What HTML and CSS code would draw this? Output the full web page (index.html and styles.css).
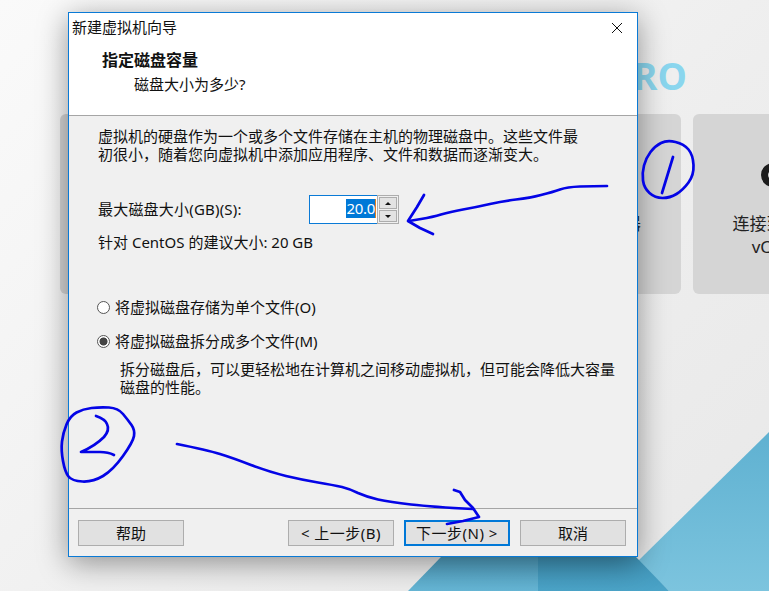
FILE: index.html
```html
<!DOCTYPE html>
<html lang="zh-CN">
<head>
    <meta charset="UTF-8">
    <meta name="viewport" content="width=device-width, initial-scale=1.0">
    <title>新建虚拟机向导</title>
    <link rel="stylesheet" href="styles.css">
</head>
<body>
    <!-- home page behind the dialog -->
    <div class="home">
        <svg class="shapes" width="769" height="591" viewBox="0 0 769 591">
            <defs>
                <linearGradient id="tri1" x1="0" y1="0" x2="0" y2="1">
                    <stop offset="0" stop-color="#5fb1d1"/>
                    <stop offset="1" stop-color="#7cc4de"/>
                </linearGradient>
                <linearGradient id="tri2" x1="0" y1="0" x2="0" y2="1">
                    <stop offset="0" stop-color="#4f9fc0"/>
                    <stop offset="1" stop-color="#66b6d5"/>
                </linearGradient>
                <linearGradient id="tri3" x1="0" y1="0" x2="0" y2="1">
                    <stop offset="0" stop-color="#3f94b8"/>
                    <stop offset="1" stop-color="#4ba4c8"/>
                </linearGradient>
            </defs>
            <polygon points="769,432 638,561 669,591 769,591" fill="url(#tri1)"/>
            <polygon points="441,557 538,557 538,591 408,591" fill="url(#tri2)"/>
            <polygon points="538,557 636,557 669,591 538,591" fill="url(#tri3)"/>
        </svg>
        <div class="brand">PRO</div>
        <div class="cards">
            <div class="card"></div>
            <div class="card"></div>
            <div class="card"><div class="card-label">连接远程服务器</div></div>
            <div class="card card-cut">
                <div class="card-icon"></div>
                <div class="card-label">连接到 VMware<br>vCloud Air</div>
            </div>
        </div>
    </div>

    <div class="dialog">
        <div class="titlebar">
            <span class="title-text">新建虚拟机向导</span>
            <svg class="close" width="14" height="14" viewBox="0 0 14 14">
                <path d="M2 2 L12 12 M12 2 L2 12" stroke="#111" stroke-width="1" fill="none"/>
            </svg>
        </div>
        <div class="header">
            <div class="header-title">指定磁盘容量</div>
            <div class="header-sub">磁盘大小为多少?</div>
        </div>
        <div class="content">
            <p class="intro">虚拟机的硬盘作为一个或多个文件存储在主机的物理磁盘中。这些文件最<br>初很小，随着您向虚拟机中添加应用程序、文件和数据而逐渐变大。</p>
            <div class="size-row">
                <label class="size-label">最大磁盘大小(GB)(S):</label>
                <div class="spin-input"><span class="selected">20.0</span></div>
                <div class="spin-btns">
                    <div class="spin-btn"><i class="up"></i></div>
                    <div class="spin-btn"><i class="down"></i></div>
                </div>
            </div>
            <div class="hint">针对 CentOS 的建议大小: 20 GB</div>
            <div class="radio-row first">
                <span class="radio"></span>
                <span class="radio-text">将虚拟磁盘存储为单个文件(O)</span>
            </div>
            <div class="radio-row second">
                <span class="radio checked"></span>
                <span class="radio-text">将虚拟磁盘拆分成多个文件(M)</span>
            </div>
            <p class="desc">拆分磁盘后，可以更轻松地在计算机之间移动虚拟机，但可能会降低大容量<br>磁盘的性能。</p>
        </div>
        <div class="footer">
            <button class="btn">帮助</button>
            <div class="spacer"></div>
            <button class="btn btn-wide">&lt; 上一步(B)</button>
            <button class="btn btn-wide btn-default">下一步(N) &gt;</button>
            <button class="btn">取消</button>
        </div>
    </div>

    <!-- pen marks drawn over the screenshot -->
    <svg class="marks" width="769" height="591" viewBox="0 0 769 591">
        <g fill="none" stroke="#0404e6" stroke-width="2.7" stroke-linecap="round" stroke-linejoin="round">
            <path d="M675.5 142 Q667 140 661 143 Q655 146 650.5 152 Q646 158 644 165.5 Q642 173 643 180.5 Q644 188 649.5 193 Q655 198 662.5 198 Q670 198 676.5 194 Q683 190 688.5 182.5 Q694 175 693.5 165 Q693 155 688.5 149.5 Q684 144 675.5 142"/>
            <path d="M673 157 L662 193"/>
            <path d="M607 186 L580 186.5 Q567 187 560 189.5 Q553 192 541 195 Q530 198 516 199.5 Q503 201 490 204 Q477 207 463 209.5 Q450 212 441 214.5 Q433 217 421 219 L409 221"/>
            <path d="M424 195 L417 207 L408 221 L420 228 L433 234"/>
            <path d="M91.5 408 Q100 407 109 407.5 Q118 408 123 414 Q128 420 131.5 425 Q135 430 134 436 Q133 442 123 456 Q113 470 103 476 Q93 482 82.5 481.5 Q72 481 68.5 476.5 Q65 472 63 461 Q61 450 62 441.5 Q63 433 66.5 424.5 Q70 416 76.5 412.5 Q83 409 91.5 408"/>
            <path d="M96 416 Q105 419 107 424 Q110 430 104 437 Q95 446 81 452 L100 452 Q108 452 114 455"/>
            <path d="M177 444 Q207 450 220 454 Q233 458 251 465 Q270 472 286 476 Q303 480 318 482.5 Q333 485 342 487 Q350 489 358 493 Q367 497 378 499.5 Q390 502 411 504.5 Q433 507 473 509"/>
            <path d="M454 490 L460 492 L465 500 L473 508 L479 517 L463 521 L447 524"/>
        </g>
    </svg>
</body>
</html>
```

FILE: styles.css
```css
* { margin: 0; padding: 0; box-sizing: border-box; }
html, body { width: 769px; height: 591px; overflow: hidden; }
body { position: relative; font-family: "Noto Sans", "Noto Sans CJK SC", sans-serif; font-size: 15px; color: #111; background: linear-gradient(135deg, #fafafa 0%, #eeeeee 60%, #e8e8e8 100%); }

.home { width: 769px; height: 591px; overflow: hidden; position: relative; }
.shapes { position: absolute; left: 0; top: 0; }
.brand { position: relative; height: 114px; padding: 53px 82px 0 0; text-align: right; font-family: "Open Sans", "Liberation Sans", sans-serif; font-size: 37px; line-height: 46px; font-weight: 700; color: #8ad6ee; }
.cards { position: relative; display: flex; gap: 12px; padding-left: 60px; width: 1100px; }
.card { width: 199px; height: 180px; flex: none; background: #d5d5d5; border-radius: 6px; text-align: center; padding-top: 98px; }
.card-label { font-size: 17px; line-height: 23px; color: #222; }
.card-cut { padding-top: 0; }
.card-icon { width: 24px; height: 24px; margin: 49px 0 25px 68px; border: 7px solid #1c1c1c; border-radius: 50%; }

.dialog { position: absolute; left: 68px; top: 12px; width: 570px; height: 545px; display: flex; flex-direction: column; background: #f0f0f0; border: 1px solid #0a7ad6; box-shadow: 0 6px 28px rgba(0,0,0,0.4); }
.titlebar { height: 30px; flex: none; display: flex; align-items: center; justify-content: space-between; padding: 0 13px 0 3px; background: white; }
.title-text { padding-bottom: 3px; }
.close { display: block; }
.header { height: 73px; flex: none; padding: 5px 0 0 33px; background: white; border-bottom: 1px solid #a5a5a5; }
.header-title { font-size: 16px; line-height: 24px; font-weight: 700; }
.header-sub { padding-left: 32px; line-height: 24px; }

.content { flex: 1; padding: 11px 0 0 29px; }
.intro { line-height: 18px; }
.size-row { display: flex; align-items: center; height: 30px; margin-top: 31px; }
.size-label { width: 211px; padding-bottom: 2px; letter-spacing: 0.2px; }
.spin-input { width: 68px; height: 29px; margin-top: 1px; background: white; border: 1px solid #0a7ad6; border-right: none; text-align: right; padding: 2px 1px 0 0; }
.selected { display: inline-block; height: 19px; line-height: 19px; background: #0078d7; color: white; border-right: 1px solid #e08020; letter-spacing: -0.3px; }
.spin-btns { width: 22px; height: 29px; margin-top: 1px; border: 1px solid #adadad; padding: 1px; display: flex; flex-direction: column; justify-content: space-between; }
.spin-btn { height: 12px; background: #e3e3e3; border: 1px solid #adadad; display: flex; align-items: center; justify-content: center; }
.spin-btn i { width: 0; height: 0; border-left: 3px solid transparent; border-right: 3px solid transparent; }
.spin-btn .up { border-bottom: 3px solid #111; }
.spin-btn .down { border-top: 3px solid #111; }
.hint { line-height: 18px; margin-top: 9px; }

.radio-row { display: flex; align-items: center; height: 18px; gap: 5px; }
.radio-row.first { margin-top: 47px; }
.radio-row.second { margin-top: 16px; }
.radio-text { padding-bottom: 2px; }
.radio { width: 13px; height: 13px; flex: none; border: 1px solid #555; border-radius: 50%; background: white; margin-left: -1px; }
.radio.checked { background: radial-gradient(circle, #444 0 3.6px, white 4.4px); }
.desc { margin: 10px 0 0 22px; line-height: 18px; }

.footer { height: 48px; flex: none; display: flex; gap: 10px; padding: 11px 11px 0 9px; border-top: 1px solid #a5a5a5; }
.spacer { flex: 1; }
.btn { width: 106px; height: 26px; font: inherit; color: #111; background: #e1e1e1; border: 1px solid #adadad; line-height: 22px; }
.btn-wide { letter-spacing: 0.5px; }
.btn-default { border: 2px solid #0078d7; }

.marks { position: absolute; left: 0; top: 0; pointer-events: none; }
```
